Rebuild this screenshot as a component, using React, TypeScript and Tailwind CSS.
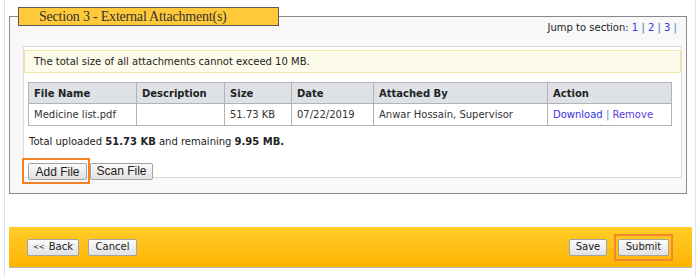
import type { ReactNode } from 'react'

const cols = [
  { label: 'File Name', w: 'w-[108px]' },
  { label: 'Description', w: 'w-[88px]' },
  { label: 'Size', w: 'w-[67px]' },
  { label: 'Date', w: 'w-[82px]' },
  { label: 'Attached By', w: 'w-[174px]' },
  { label: 'Action', w: 'w-[124px]' },
]

function GrayButton({ children, className = '' }: { children: ReactNode; className?: string }) {
  return (
    <button
      className={`h-[17px] border border-[#a3a3a3] rounded-[2px] bg-gradient-to-b from-[#fbfbfb] to-[#e1e1e1] text-[#222] leading-none flex items-center justify-center ${className}`}
    >
      {children}
    </button>
  )
}

function App() {
  return (
    <div className="w-[698px] h-[277px] bg-white overflow-hidden font-['DejaVu_Sans',sans-serif] text-[10px] text-[#222]">
      <div className="ml-[4px] w-[692px] h-full border-l border-r border-[#dde5ee] pt-[16px]">

        {/* Section fieldset */}
        <div className="relative ml-[4px] w-[678px] h-[178px] border border-[#8a8a8a] bg-[#f8f8f8]">
          <div className="absolute left-[8px] -top-[10px] h-[19px] w-[261px] bg-[#ffc93a] border border-[#5a5a5a] pl-[20px] font-['Liberation_Serif',serif] text-[14px] tracking-[-0.2px] leading-[18px] text-[#333]">
            Section 3 - External Attachment(s)
          </div>

          {/* Jump to section */}
          <div className="h-[29px] pt-[4px] pr-[9px] flex justify-end items-start leading-[13px]">
            <span className="text-[#222]">Jump to section:&nbsp;</span>
            <span className="text-[#3333ee]">1</span>
            <span className="text-[#3a6a9a]">&nbsp;|&nbsp;</span>
            <span className="text-[#3333ee]">2</span>
            <span className="text-[#3a6a9a]">&nbsp;|&nbsp;</span>
            <span className="text-[#3333ee]">3</span>
            <span className="text-[#1a8ad8]">&nbsp;|</span>
          </div>

          {/* Inner panel */}
          <div className="ml-[13px] w-[659px] h-[132px] border border-[#dcdcdc] bg-white pt-[3px]">
            <div className="h-[23px] w-[657px] border border-[#f0e4a6] bg-[#fdfbea] pl-[9px] flex items-center text-[#222]">
              The total size of all attachments cannot exceed 10 MB.
            </div>

            <table className="mt-[9px] ml-[4px] w-[644px] border-collapse table-fixed">
              <thead>
                <tr className="h-[21px] bg-[#dee2e6]">
                  {cols.map((c) => (
                    <th
                      key={c.label}
                      className={`${c.w} border border-[#b3b3b3] pl-[5px] text-left font-bold text-[#222]`}
                    >
                      {c.label}
                    </th>
                  ))}
                </tr>
              </thead>
              <tbody>
                <tr className="h-[22px] bg-white text-[#333]">
                  <td className="border border-[#b3b3b3] pl-[5px]">Medicine list.pdf</td>
                  <td className="border border-[#b3b3b3] pl-[5px]"></td>
                  <td className="border border-[#b3b3b3] pl-[5px]">51.73 KB</td>
                  <td className="border border-[#b3b3b3] pl-[5px]">07/22/2019</td>
                  <td className="border border-[#b3b3b3] pl-[5px]">Anwar Hossain, Supervisor</td>
                  <td className="border border-[#b3b3b3] pl-[5px]">
                    <span className="text-[#3333dd]">Download</span>
                    <span className="text-[#3a8ad8]"> | </span>
                    <span className="text-[#5a3add]">Remove</span>
                  </td>
                </tr>
              </tbody>
            </table>

            <div className="mt-[9px] ml-[5px] leading-[13px] text-[#222]">
              Total uploaded <b>51.73 KB</b> and remaining <b>9.95 MB.</b>
            </div>

            <div className="mt-[10px] -ml-[2px] flex items-center font-['Liberation_Sans',sans-serif] text-[12px]">
              <div className="border-2 border-[#f08228] pl-[4px] pr-[1px] pt-[3px] pb-[2px]">
                <GrayButton className="w-[59px]">Add File</GrayButton>
              </div>
              <GrayButton className="w-[63px]">Scan File</GrayButton>
            </div>
          </div>
        </div>

        {/* Footer bar */}
        <div className="mt-[33px] ml-[4px] w-[683px] h-[41px] border-b border-[#b9b9b9] bg-gradient-to-b from-[#ffcd26] to-[#ffb300] pl-[18px] pr-[19px] flex items-center text-[10px]">
          <GrayButton className="w-[52px] gap-[4px]">
            <span className="text-[7px]">&lt;&lt;</span>
            <span>Back</span>
          </GrayButton>
          <GrayButton className="ml-[9px] w-[49px]">Cancel</GrayButton>
          <div className="flex-1" />
          <GrayButton className="w-[38px]">Save</GrayButton>
          <div className="ml-[7px] border-2 border-[#f5862a] px-[2px] py-[3px]">
            <GrayButton className="w-[51px]">Submit</GrayButton>
          </div>
        </div>

      </div>
    </div>
  )
}

export default App
